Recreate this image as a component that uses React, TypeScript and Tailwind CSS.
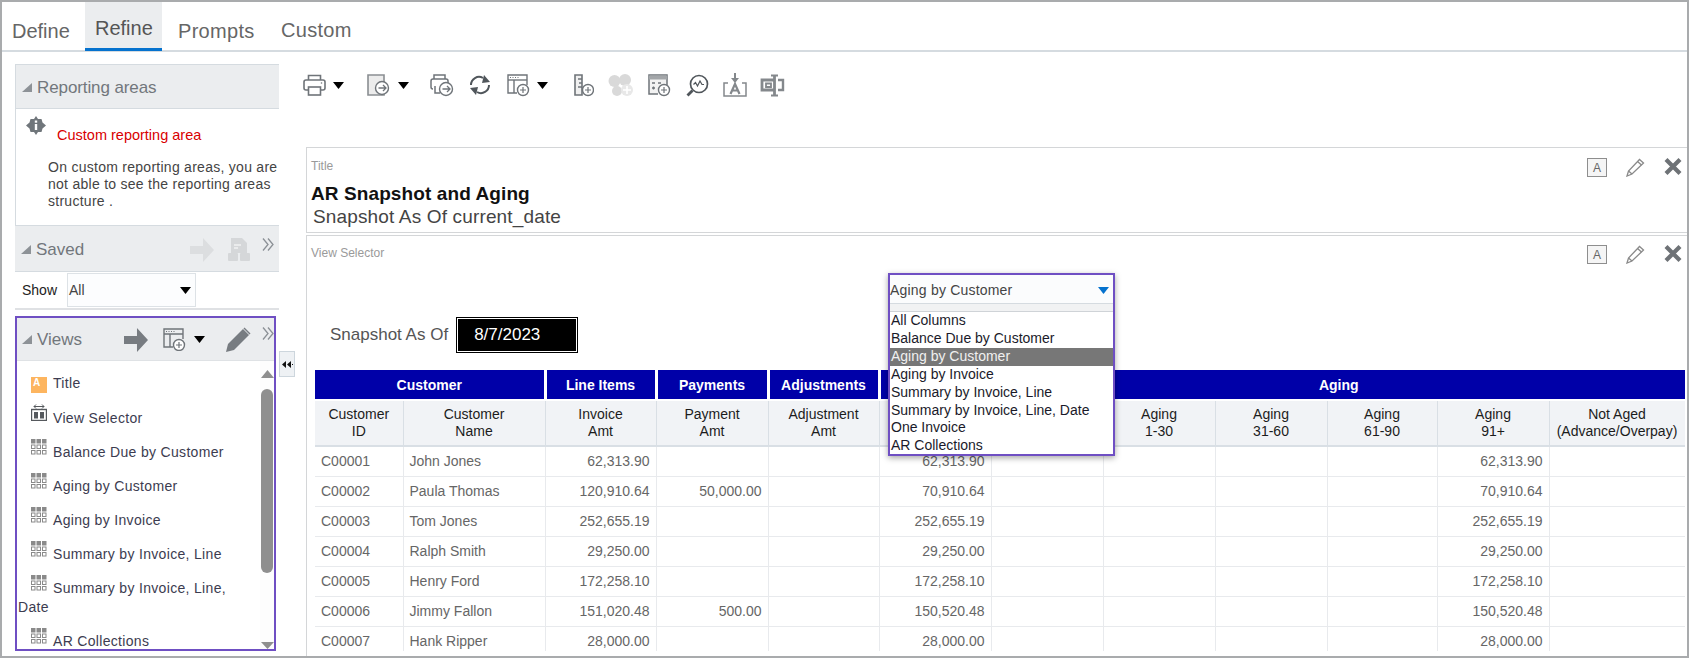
/**
 * AR Snapshot and Aging - report editor, Refine tab
 */

const grey = '#6f7479';

function Caret({ className = '' }: { className?: string }) {
  return (
    <svg width="11" height="7" viewBox="0 0 11 7" className={className}>
      <path d="M0 0h11L5.5 7z" fill="#000" />
    </svg>
  );
}

function PlusBadge({ x, y, color = grey }: { x: number; y: number; color?: string }) {
  return (
    <g>
      <circle cx={x} cy={y} r="5.5" fill="#fff" stroke={color} strokeWidth="1.4" />
      <path d={`M${x - 3} ${y}h6M${x} ${y - 3}v6`} stroke={color} strokeWidth="1.2" />
    </g>
  );
}

function ArrowBadge({ x, y }: { x: number; y: number }) {
  return (
    <g>
      <circle cx={x} cy={y} r="6.5" fill="#fff" stroke={grey} strokeWidth="1.4" />
      <path d={`M${x - 3.5} ${y}h7M${x + 1} ${y - 3}l3 3-3 3`} stroke={grey} strokeWidth="1.3" fill="none" />
    </g>
  );
}

function PrinterIcon() {
  return (
    <svg width="23" height="22" viewBox="0 0 23 22" fill="none" stroke={grey} strokeWidth="1.6">
      <path d="M5.5 6V1.5h12V6" />
      <path d="M5 16H3a2 2 0 0 1-2-2V8a2 2 0 0 1 2-2h17a2 2 0 0 1 2 2v6a2 2 0 0 1-2 2h-2" />
      <rect x="5.5" y="13" width="12" height="8" />
      <circle cx="18.5" cy="9" r="0.8" fill={grey} stroke="none" />
    </svg>
  );
}

function ExportIcon() {
  return (
    <svg width="23" height="22" viewBox="0 0 23 22" fill="none">
      <path d="M1 1h16v20H1z" fill="#ececec" stroke="#8a8e92" strokeWidth="1.6" />
      <ArrowBadge x={15} y={14} />
    </svg>
  );
}

function PrintExportIcon() {
  return (
    <svg width="24" height="23" viewBox="0 0 24 23" fill="none" stroke={grey} strokeWidth="1.5">
      <path d="M4 5V1h11v4" />
      <path d="M3 15a2 2 0 0 1-2-2V7a2 2 0 0 1 2-2h13a2 2 0 0 1 2 2v2" />
      <path d="M5 12v7h5" />
      <ArrowBadge x={16} y={15} />
    </svg>
  );
}

function RefreshIcon() {
  return (
    <svg width="22" height="20" viewBox="0 0 22 20" fill="none" stroke="#50565b" strokeWidth="2">
      <path d="M2 10a8 8 0 0 1 12-7" />
      <path d="M20 10a8 8 0 0 1-12 7" />
      <path d="M15 0l6 7-8 1z" fill="#50565b" stroke="none" />
      <path d="M7 20l-6-7 8-1z" fill="#50565b" stroke="none" />
    </svg>
  );
}

function AddViewIcon() {
  return (
    <svg width="23" height="23" viewBox="0 0 23 23" fill="none">
      <path d="M10 19H1V1h19v10" stroke={grey} strokeWidth="1.4" />
      <path d="M1 6h19" stroke={grey} strokeWidth="1.4" />
      <path d="M3 3.500h1M5.500 3.500h1M8 3.500h1M10.500 3.500h1" stroke={grey} strokeWidth="1.2" />
      <path d="M7 6v13" stroke={grey} strokeWidth="1.4" />
      <PlusBadge x={16} y={16} />
    </svg>
  );
}

function RulerAddIcon() {
  return (
    <svg width="20" height="23" viewBox="0 0 20 23" fill="none">
      <path d="M1 1h7v20H1z" fill="#f0f0f0" stroke={grey} strokeWidth="1.6" />
      <path d="M4 5h4M5 9h3M4 13h4" stroke={grey} strokeWidth="1.3" />
      <PlusBadge x={14} y={16} />
    </svg>
  );
}

function DisabledChartIcon() {
  return (
    <svg width="26" height="23" viewBox="0 0 26 23">
      <circle cx="6.5" cy="7" r="6" fill="#d9d9d9" />
      <circle cx="17" cy="6" r="6" fill="#d9d9d9" />
      <circle cx="9" cy="17" r="5" fill="#d9d9d9" />
      <circle cx="19" cy="16" r="6" fill="#e8e8e8" />
      <path d="M15 16h8M19 12v8" stroke="#fff" strokeWidth="1.6" />
    </svg>
  );
}

function CalcAddIcon() {
  return (
    <svg width="23" height="23" viewBox="0 0 23 23" fill="none">
      <path d="M10 20H1V1h18v10" fill="#f2f2f2" stroke={grey} strokeWidth="1.5" />
      <path d="M1 3.500h18" stroke="#a3a6a9" strokeWidth="4" />
      <path d="M4 9h3M4 14h3M5.5 12.500v3M10 9h3" stroke={grey} strokeWidth="1.3" />
      <PlusBadge x={16} y={16} />
    </svg>
  );
}

function AnalyzeIcon() {
  return (
    <svg width="23" height="23" viewBox="0 0 23 23" fill="none" stroke="#50565b">
      <circle cx="13" cy="10" r="8.5" strokeWidth="1.7" />
      <path d="M7.5 10.5l2-2 2 3.5 2.5-5 2 3.5h2" strokeWidth="1.2" />
      <path d="M6.5 16.5L1.5 21.5" strokeWidth="2.8" />
    </svg>
  );
}

function InsertTextIcon() {
  return (
    <svg width="24" height="24" viewBox="0 0 24 24" fill="none" stroke="#84888c">
      <path d="M5 10H1v13h22V10h-4" strokeWidth="1.5" />
      <path d="M12 0v6" strokeWidth="2" />
      <path d="M8 5h8l-4 5z" fill="#84888c" stroke="none" />
      <path d="M7.5 21L12 11l4.500 10M9.500 17.500h5" strokeWidth="2.200" />
    </svg>
  );
}

function ColumnTextIcon() {
  return (
    <svg width="25" height="23" viewBox="0 0 25 23" fill="none" stroke="#84888c">
      <path d="M14 6H2v10h12" strokeWidth="2.8" />
      <path d="M6 9.500h5v3.500H6z" strokeWidth="1.800" />
      <path d="M14.500 1v21" strokeWidth="2.800" />
      <path d="M11 1.500h7M11 21.500h7" strokeWidth="1.800" />
      <path d="M18 6h5v10h-5" strokeWidth="2.400" />
    </svg>
  );
}

function RightArrow({ color, className = '' }: { color: string; className?: string }) {
  return (
    <svg width="24" height="24" viewBox="0 0 24 24" className={className}>
      <path d="M0 8h13V0l11 12-11 12v-8H0z" fill={color} />
    </svg>
  );
}

function DoubleChevron({ className = '' }: { className?: string }) {
  return (
    <svg width="12" height="13" viewBox="0 0 12 13" fill="none" stroke="#8b9096" strokeWidth="1.300" className={`self-start ml-[11px] ${className}`}>
      <path d="M1 0.500l5 6-5 6M6 0.500l5 6-5 6" />
    </svg>
  );
}

function Collapse() {
  return (
    <svg width="10" height="9" viewBox="0 0 10 9" className="shrink-0">
      <path d="M10 0v9H0z" fill="#8d9297" />
    </svg>
  );
}

function PanelTools() {
  return (
    <div className="flex items-start gap-[19px]">
      <div className="w-[20px] h-[19px] flex items-center justify-center border border-[#8e8e8e] bg-[#f5f5f5] text-[12px] leading-none text-[#666]">
        A
      </div>
      <svg width="19" height="19" viewBox="0 0 19 19" fill="none" stroke="#8a8a8a" strokeWidth="1.300">
        <path d="M1 18l1.500-5L13.500 1.500 17.500 5 6 16z" />
        <path d="M2.500 13L6 16M11.500 3.500l4 3.500" />
      </svg>
      <svg width="18" height="17" viewBox="0 0 18 17" stroke="#6e7276" strokeWidth="4.200">
        <path d="M2 1.500l14 14M16 1.500l-14 14" />
      </svg>
    </div>
  );
}

function GridIcon() {
  return (
    <svg width="16" height="16" viewBox="0 0 16 16" className="inline-block align-[2px] ml-[13px] mr-[6px]">
      {[0, 1, 2].flatMap((r) =>
        [0, 1, 2].map((c) =>
          r === 0 ? (
            <rect key={`${r}${c}`} x={c * 5.500} y="0" width="4.500" height="4.500" fill="#8a8a8a" />
          ) : (
            <rect key={`${r}${c}`} x={c * 5.500 + 0.500} y={r * 5.500 + 0.500} width="3.500" height="3.500" fill="#fff" stroke="#8a8a8a" />
          )
        )
      )}
    </svg>
  );
}

function TitleIcon() {
  return (
    <span className="inline-block align-[2px] ml-[13px] mr-[6px] w-[16px] h-[16px] bg-[#fdb55f] text-white text-[10px] leading-[11px] font-bold pl-[2px]">
      A
    </span>
  );
}

function SelectorIcon() {
  return (
    <svg width="16" height="17" viewBox="0 0 16 17" className="inline-block align-[2px] ml-[13px] mr-[6px]" fill="none" stroke="#55595d">
      <path d="M3 2.500h10M3 2.500l2-2M3 2.500l2 2M13 2.500l-2-2M13 2.500l-2 2" strokeWidth="1" />
      <rect x="0.500" y="5.500" width="15" height="11" strokeWidth="1.400" />
      <rect x="3" y="8" width="4" height="6.500" fill="#55595d" stroke="none" />
      <rect x="9" y="8" width="4" height="6.500" fill="#55595d" stroke="none" />
    </svg>
  );
}

const viewItems = [
  { label: 'Title', icon: <TitleIcon /> },
  { label: 'View Selector', icon: <SelectorIcon /> },
  { label: 'Balance Due by Customer', icon: <GridIcon /> },
  { label: 'Aging by Customer', icon: <GridIcon /> },
  { label: 'Aging by Invoice', icon: <GridIcon /> },
  { label: 'Summary by Invoice, Line', icon: <GridIcon /> },
  { label: 'Summary by Invoice, Line, Date', icon: <GridIcon /> },
  { label: 'AR Collections', icon: <GridIcon /> },
];

function Sidebar() {
  return (
    <div className="relative w-[264px] shrink-0 mt-[12px] ml-[13px]">
      {/* Reporting areas */}
      <div className="h-[45px] flex items-center gap-[5px] pl-[6px] pt-[2px] bg-[#ebedef] border-t border-l border-b border-[#d5dbe0]">
        <Collapse />
        <span className="text-[17px] text-[#72777c] -tracking-[0.1px]">Reporting areas</span>
      </div>
      <div className="h-[116px] border-l border-[#d5dbe0] pl-[10px] pt-[7px]">
        <div className="flex items-start gap-[11px]">
          <svg width="20" height="19" viewBox="0 0 20 19" className="shrink-0">
            <path d="M10 0l2 3h3.500l1 3.500L20 9.500l-3.500 3-1 3.500H12l-2 3-2-3H4.500l-1-3.500L0 9.500l3.500-3 1-3.500H8z" fill="#70767b" />
            <rect x="8.800" y="8" width="2.400" height="6" fill="#fff" />
            <rect x="8.800" y="4.500" width="2.400" height="2.200" fill="#fff" />
          </svg>
          <span className="mt-[10px] text-[14.5px] leading-[18px] text-[#d90000]">Custom reporting area</span>
        </div>
        <p className="mt-[15px] ml-[22px] text-[14px] leading-[17px] tracking-[0.27px] text-[#444]">
          On custom reporting areas, you are not able to see the reporting areas structure .
        </p>
      </div>

      {/* Saved */}
      <div className="h-[47px] flex items-center pl-[6px] pt-[2px] bg-[#ebedef] border-t border-b border-[#d5dbe0]">
        <Collapse />
        <span className="ml-[5px] text-[17px] text-[#72777c]">Saved</span>
        <RightArrow color="#dcdee0" className="ml-auto" />
        <svg width="23" height="24" viewBox="0 0 23 24" className="ml-[14px]">
          <path d="M3 0h11l5 5v10H3z" fill="#d5d7d9" />
          <rect x="0" y="15" width="10" height="8" rx="1" fill="#d5d7d9" />
          <rect x="12" y="15" width="10" height="8" rx="1" fill="#d5d7d9" />
          <path d="M6 7h7M6 10h4" stroke="#fff" />
        </svg>
        <DoubleChevron className="mt-[10px]" />
        <span className="w-[5px]" />
      </div>
      <div className="h-[38px] flex items-center border-b-2 border-[#dfe1e4] pl-[7px]">
        <span className="text-[14px] text-[#222] w-[45px]">Show</span>
        <div className="w-[129px] h-[34px] flex items-center justify-between border border-[#dde2e6] pl-[1px] pr-[4px] bg-[#fcfdfe] text-[14px] text-[#444]">
          All
          <Caret />
        </div>
      </div>

      {/* Views */}
      <div className="mt-[6px] h-[335px] w-[261px] flex flex-col border-2 border-[#6f4fc3]">
        <div className="h-[43px] shrink-0 flex items-center pl-[5px] pt-[1px] bg-[#ebedef] border-b border-[#dfe2e5]">
          <Collapse />
          <span className="ml-[5px] text-[17px] text-[#72777c]">Views</span>
          <RightArrow color="#777c81" className="ml-[42px]" />
          <svg width="23" height="23" viewBox="0 0 23 23" fill="none" className="ml-[15px]">
            <path d="M10 19H1V1h19v10M1 6h19M7 6v13" stroke={grey} strokeWidth="1.400" />
            <path d="M3 3.500h1M5.500 3.500h1M8 3.500h1M10.500 3.500h1" stroke={grey} strokeWidth="1.200" />
            <PlusBadge x={16} y={17} />
          </svg>
          <Caret className="ml-[8px]" />
          <svg width="25" height="25" viewBox="0 0 25 25" className="ml-[21px]">
            <path d="M0 25l2-8L17 2l6 6L8 23z" fill="#777c81" />
            <path d="M18.500 0.500l6 6-1 1-6-6z" fill="#777c81" />
          </svg>
          <DoubleChevron className="mt-[8px]" />
        </div>
        <div className="flex-1 min-h-0 flex overflow-hidden">
          <div className="flex-1 pl-[1px] pt-[13px] text-[14px] leading-[19px] tracking-[0.32px] text-[#3c3c50]">
            {viewItems.map((item) => (
              <div key={item.label} className="mb-[11px]">
                {item.icon}
                {item.label}
              </div>
            ))}
          </div>
          <div className="w-[14px] shrink-0 flex flex-col items-center bg-[#fdfdfd]">
            <svg width="13" height="8" viewBox="0 0 13 8" className="mt-[9px]">
              <path d="M0 8h13L6.500 0z" fill="#8f8f8f" />
            </svg>
            <div className="mt-[11px] w-[12px] h-[184px] rounded-[6px] bg-[#8f8f8f]" />
            <svg width="13" height="7" viewBox="0 0 13 7" className="mt-auto">
              <path d="M0 0h13L6.500 7z" fill="#8f8f8f" />
            </svg>
          </div>
        </div>
      </div>

      {/* Splitter */}
      <div className="absolute left-[264px] top-[287px] w-[16px] h-[26px] flex items-center justify-center bg-[#eef1f4] border border-[#cdd6dd]">
        <svg width="11" height="7" viewBox="0 0 11 7">
          <path d="M4 0v7L0 3.500zM9 0v7L5 3.500z" fill="#111" />
          <rect x="10" y="3" width="1" height="1" fill="#111" />
        </svg>
      </div>
    </div>
  );
}

function Toolbar() {
  return (
    <div className="h-[95px] pt-[22px] flex items-start">
      <div className="-ml-[3px] flex items-center h-[22px]">
        <PrinterIcon />
        <Caret className="ml-[7px]" />
        <span className="ml-[23px]"><ExportIcon /></span>
        <Caret className="ml-[8px]" />
        <span className="ml-[21px]"><PrintExportIcon /></span>
        <span className="ml-[15px]"><RefreshIcon /></span>
        <span className="ml-[16px]"><AddViewIcon /></span>
        <Caret className="ml-[7px]" />
        <span className="ml-[26px]"><RulerAddIcon /></span>
        <span className="ml-[14px]"><DisabledChartIcon /></span>
        <span className="ml-[14px]"><CalcAddIcon /></span>
        <span className="ml-[15px]"><AnalyzeIcon /></span>
        <span className="ml-[14px]"><InsertTextIcon /></span>
        <span className="ml-[13px]"><ColumnTextIcon /></span>
      </div>
    </div>
  );
}

const columnWidths = [88, 142, 111, 112, 111, 112, 112, 112, 112, 110, 112, 136];

const subHeaders = [
  ['Customer', 'ID'],
  ['Customer', 'Name'],
  ['Invoice', 'Amt'],
  ['Payment', 'Amt'],
  ['Adjustment', 'Amt'],
  ['Balance', 'Due'],
  ['Current', ''],
  ['Aging', '1-30'],
  ['Aging', '31-60'],
  ['Aging', '61-90'],
  ['Aging', '91+'],
  ['Not Aged', '(Advance/Overpay)'],
];

const customers = [
  { id: 'C00001', name: 'John Jones', invoice: '62,313.90', payment: '', balance: '62,313.90' },
  { id: 'C00002', name: 'Paula Thomas', invoice: '120,910.64', payment: '50,000.00', balance: '70,910.64' },
  { id: 'C00003', name: 'Tom Jones', invoice: '252,655.19', payment: '', balance: '252,655.19' },
  { id: 'C00004', name: 'Ralph Smith', invoice: '29,250.00', payment: '', balance: '29,250.00' },
  { id: 'C00005', name: 'Henry Ford', invoice: '172,258.10', payment: '', balance: '172,258.10' },
  { id: 'C00006', name: 'Jimmy Fallon', invoice: '151,020.48', payment: '500.00', balance: '150,520.48' },
  { id: 'C00007', name: 'Hank Ripper', invoice: '28,000.00', payment: '', balance: '28,000.00' },
];

const blueCell = 'h-[30px] p-0 pt-[2px] bg-[#0000a8] text-white text-[14px] font-bold text-center border-b-[2px] border-r-[3px] border-white';
const blueCellLast = 'h-[30px] p-0 pt-[2px] bg-[#0000a8] text-white text-[14px] font-bold text-center border-b-[2px] border-white';
const dataCell = 'h-[30px] p-0 px-[6px] border-r border-b border-[#e8eaed]';

function AgingTable() {
  return (
    <div className="h-[281px] overflow-hidden mt-[17px]">
      <table className="table-fixed border-collapse w-[1370px] text-[14px] leading-[17px] text-[#666]">
        <colgroup>
          {columnWidths.map((w, i) => (
            <col key={i} width={w} />
          ))}
        </colgroup>
        <thead>
          <tr>
            <th colSpan={2} className={blueCell}>Customer</th>
            <th className={blueCell}>Line Items</th>
            <th className={blueCell}>Payments</th>
            <th className={blueCell}>Adjustments</th>
            <th className={blueCell}>Balance</th>
            <th colSpan={6} className={blueCellLast}>Aging</th>
          </tr>
          <tr>
            {subHeaders.map(([a, b], i) => (
              <th key={i} className="h-[46px] p-0 bg-[#f1f3f6] font-normal text-[#1c1c1c] text-center border-r border-b-2 border-[#d9dfe5]">
                {a}
                <br />
                {b}
              </th>
            ))}
          </tr>
        </thead>
        <tbody>
          {customers.map((c) => (
            <tr key={c.id}>
              <td className={dataCell}>{c.id}</td>
              <td className={dataCell}>{c.name}</td>
              <td className={`${dataCell} text-right`}>{c.invoice}</td>
              <td className={`${dataCell} text-right`}>{c.payment}</td>
              <td className={dataCell} />
              <td className={`${dataCell} text-right`}>{c.balance}</td>
              <td className={dataCell} />
              <td className={dataCell} />
              <td className={dataCell} />
              <td className={dataCell} />
              <td className={`${dataCell} text-right`}>{c.balance}</td>
              <td className={dataCell} />
            </tr>
          ))}
        </tbody>
      </table>
    </div>
  );
}

const viewOptions = [
  'All Columns',
  'Balance Due by Customer',
  'Aging by Customer',
  'Aging by Invoice',
  'Summary by Invoice, Line',
  'Summary by Invoice, Line, Date',
  'One Invoice',
  'AR Collections',
];

function ViewDropdown() {
  return (
    <div className="absolute left-[581px] top-[37px] w-[227px] h-[183px] border-2 border-[#6f4fc3] bg-white shadow-[0_2px_6px_rgba(0,0,0,0.35)] z-10">
      <div className="h-[29px] flex items-center justify-between pt-[2px] pr-[4px] bg-[#fbfcfd] border-b border-[#d5dbe0] text-[14px] tracking-[0.2px] text-[#444]">
        Aging by Customer
        <svg width="11" height="7" viewBox="0 0 11 7">
          <path d="M0 0h11L5.500 7z" fill="#0572ce" />
        </svg>
      </div>
      <div className="h-[8px] bg-[#f1f2f3] border-b border-[#cfd3d7]" />
      <div className="text-[14px] leading-[17.900px] text-[#1a1a2a]">
        {viewOptions.map((option) => (
          <div key={option} className={`pl-[1px] ${option === 'Aging by Customer' ? 'bg-[#777] text-[#f0f0f0]' : ''}`}>
            {option}
          </div>
        ))}
      </div>
    </div>
  );
}

export default function App() {
  return (
    <div className="w-[1689px] h-[658px] overflow-hidden flex flex-col border-2 border-[#a9abad] bg-white [font-family:'Liberation_Sans',Arial,sans-serif]">
      {/* Tabs */}
      <div className="h-[50px] shrink-0 flex border-b-2 border-[#d5dbe0] text-[20px] text-[#666]">
        <div className="w-[83px] pl-[10px] pt-[14px]">Define</div>
        <div className="w-[77px] pl-[10px] pt-[11px] bg-[#ebedef] text-[#555] border-b-[3px] border-[#0572ce] h-[49px]">Refine</div>
        <div className="w-[103px] pl-[16px] pt-[14px] tracking-[0.3px]">Prompts</div>
        <div className="pl-[16px] pt-[13px] tracking-[0.3px]">Custom</div>
      </div>

      <div className="flex-1 min-h-0 flex">
        <Sidebar />
        <div className="flex-1 min-w-0 ml-[27px] flex flex-col">
          <Toolbar />
          {/* Title panel */}
          <div className="h-[86px] shrink-0 flex justify-between border-t border-b border-l border-[#d4d6d8] pl-[4px] pr-[5px] pt-[10px]">
            <div>
              <div className="text-[12px] leading-[16px] text-[#9a9a9a]">Title</div>
              <div className="mt-[9px] text-[19px] leading-[22px] font-bold tracking-[0.1px] text-[#111]">AR Snapshot and Aging</div>
              <div className="ml-[2px] text-[19px] leading-[23px] tracking-[0.15px] text-[#444]">Snapshot As Of current_date</div>
            </div>
            <PanelTools />
          </div>
          {/* View selector panel */}
          <div className="relative flex-1 min-h-0 mt-[2px] border-t border-l border-[#d4d6d8] pl-[8px] pr-[2px] pt-[9px]">
            <div className="flex justify-between pr-[3px]">
              <div className="-ml-[4px] text-[12px] leading-[16px] text-[#9a9a9a]">View Selector</div>
              <PanelTools />
            </div>
            <ViewDropdown />
            <div className="mt-[53px] h-[36px] flex items-center pl-[15px] text-[17px] text-[#555]">
              <span>Snapshot As Of</span>
              <div className="ml-[8px] w-[122px] h-[36px] flex items-center pl-[18px] bg-black text-white outline outline-1 -outline-offset-2 outline-white">
                8/7/2023
              </div>
            </div>
            <AgingTable />
          </div>
        </div>
      </div>
    </div>
  );
}
